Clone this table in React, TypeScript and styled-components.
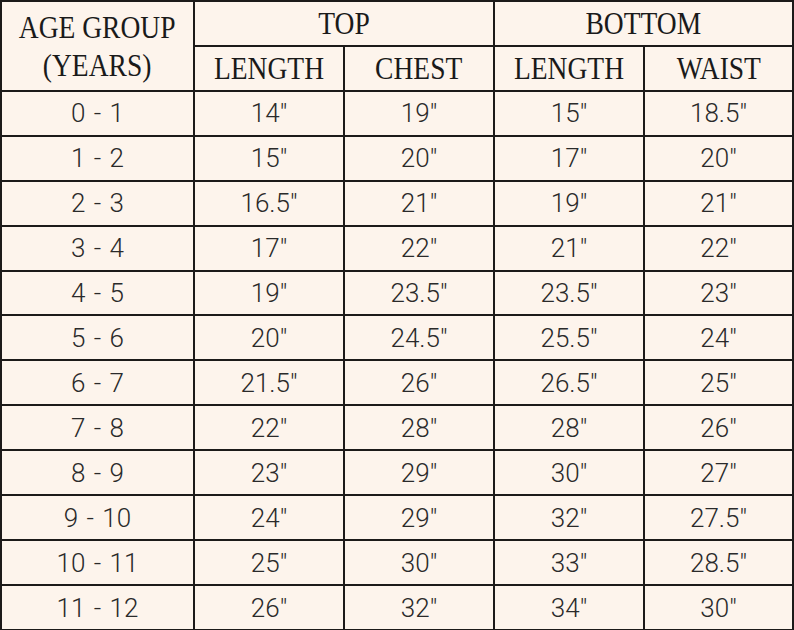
import React from 'react';
import styled, { createGlobalStyle } from 'styled-components';

const GlobalStyle = createGlobalStyle`
  html, body {
    margin: 0;
    padding: 0;
    background: #fdf4ec;
  }
`;

const Chart = styled.div`
  width: 794px;
  height: 630px;
  box-sizing: border-box;
  display: grid;
  grid-template-columns: 191px 148px 148px 148px 147px;
  grid-template-rows: repeat(14, 1fr);
  gap: 2px;
  padding: 2px 1px 1px 2px;
  background: #1c1a19;
`;

const Cell = styled.div<{ $span?: number; $rows?: number }>`
  background: #fdf4ec;
  display: flex;
  align-items: center;
  justify-content: center;
  text-align: center;
  grid-column: span ${p => p.$span || 1};
  grid-row: span ${p => p.$rows || 1};
`;

const HeadCell = styled(Cell)`
  font-family: 'Liberation Serif', 'Times New Roman', serif;
  font-size: 32px;
  line-height: 38px;
  color: #1a1a1a;
`;

// the chart's serif is narrower than Times, so squeeze it a little
const HeadLabel = styled.span`
  display: inline-block;
  white-space: nowrap;
  transform: scaleX(0.86);
`;

const DataCell = styled(Cell)`
  font-family: Roboto, 'Noto Sans', sans-serif;
  font-weight: 300;
  font-size: 26px;
  word-spacing: 2px;
  color: #2a2a2a;
`;

const rows: string[][] = [
  ['0 - 1', '14"', '19"', '15"', '18.5"'],
  ['1 - 2', '15"', '20"', '17"', '20"'],
  ['2 - 3', '16.5"', '21"', '19"', '21"'],
  ['3 - 4', '17"', '22"', '21"', '22"'],
  ['4 - 5', '19"', '23.5"', '23.5"', '23"'],
  ['5 - 6', '20"', '24.5"', '25.5"', '24"'],
  ['6 - 7', '21.5"', '26"', '26.5"', '25"'],
  ['7 - 8', '22"', '28"', '28"', '26"'],
  ['8 - 9', '23"', '29"', '30"', '27"'],
  ['9 - 10', '24"', '29"', '32"', '27.5"'],
  ['10 - 11', '25"', '30"', '33"', '28.5"'],
  ['11 - 12', '26"', '32"', '34"', '30"'],
];

export default function App() {
  return (
    <>
      <GlobalStyle />
      <Chart>
        <HeadCell $rows={2}>
          <HeadLabel>
            AGE GROUP
            <br />
            (YEARS)
          </HeadLabel>
        </HeadCell>
        <HeadCell $span={2}><HeadLabel>TOP</HeadLabel></HeadCell>
        <HeadCell $span={2}><HeadLabel>BOTTOM</HeadLabel></HeadCell>
        <HeadCell><HeadLabel>LENGTH</HeadLabel></HeadCell>
        <HeadCell><HeadLabel>CHEST</HeadLabel></HeadCell>
        <HeadCell><HeadLabel>LENGTH</HeadLabel></HeadCell>
        <HeadCell><HeadLabel>WAIST</HeadLabel></HeadCell>
        {rows.map(row =>
          row.map((value, i) => <DataCell key={row[0] + i}>{value}</DataCell>)
        )}
      </Chart>
    </>
  );
}
